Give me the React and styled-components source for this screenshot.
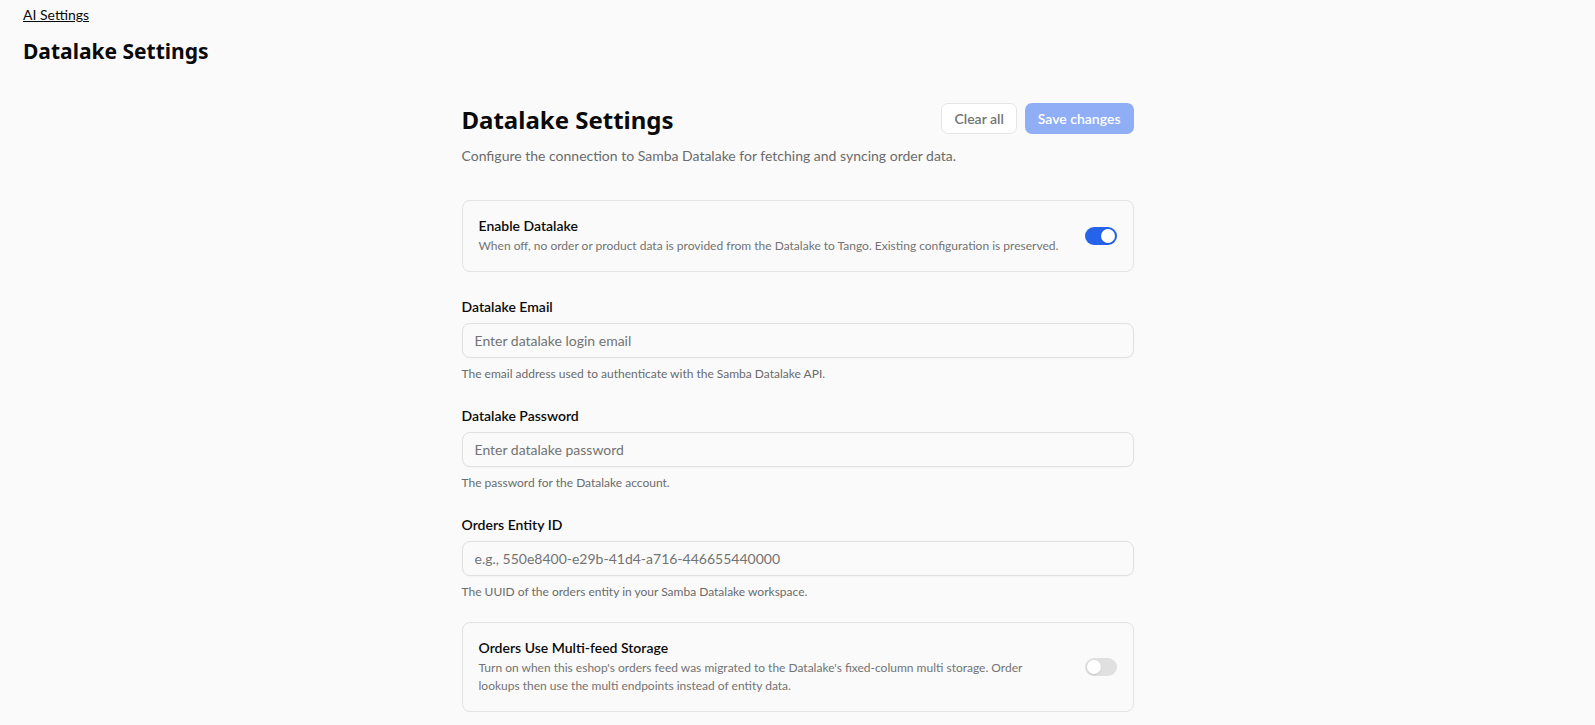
import React, { useState } from "react";
import styled, { createGlobalStyle } from "styled-components";

const GlobalStyle = createGlobalStyle`
  body {
    margin: 0;
    background: #fafafa;
    color: #0a0a0a;
    font-family: "Segoe UI", Lato, "Noto Sans", sans-serif;
  }
  * { box-sizing: border-box; }
`;

const headingFont = `"Segoe UI", "Noto Sans", Lato, sans-serif`;

const Page = styled.div`
  padding: 4px 23px 0;
`;

const Crumb = styled.a`
  display: inline-block;
  font-size: 14px;
  line-height: 20px;
  color: #0a0a0a;
  text-decoration: underline;
  cursor: pointer;
`;

const PageTitle = styled.h1`
  margin: 11px 0 0;
  font-family: ${headingFont};
  font-size: 21px;
  line-height: 30px;
  font-weight: 700;
`;

const Main = styled.main`
  width: 672px;
  margin: 37px auto 0;
`;

const HeaderRow = styled.div`
  display: flex;
  align-items: center;
  justify-content: space-between;
  height: 34px;
`;

const Title = styled.h2`
  margin: 0;
  font-family: ${headingFont};
  font-size: 24px;
  line-height: 34px;
  font-weight: 700;
`;

const Actions = styled.div`
  display: flex;
  gap: 8px;
  margin-top: -3px;
`;

const Button = styled.button`
  height: 31px;
  padding: 0 12px;
  border-radius: 7px;
  font-family: inherit;
  font-size: 14px;
  font-weight: 600;
  border: 1px solid ${(p) => (p.$primary ? "transparent" : "#e5e5e5")};
  background: ${(p) => (p.$primary ? "#8faef5" : "#ffffff")};
  color: ${(p) => (p.$primary ? "#ffffff" : "#737373")};
  cursor: pointer;
`;

const Subtitle = styled.p`
  margin: 9px 0 0;
  font-size: 14px;
  line-height: 20px;
  color: #6b6b6b;
`;

const Card = styled.div`
  display: flex;
  align-items: center;
  gap: 24px;
  margin-top: ${(p) => p.$top}px;
  padding: 15px 16px;
  border: 1px solid #e3e3e3;
  border-radius: 8px;
  background: #fafafa;
`;

const CardText = styled.div`
  flex: 1;
`;

const CardTitle = styled.div`
  font-size: 14px;
  line-height: 20px;
  font-weight: 600;
`;

const CardDesc = styled.div`
  margin-top: 1px;
  font-size: 12px;
  line-height: 18.5px;
  color: #737373;
`;

const Track = styled.button`
  position: relative;
  flex: none;
  width: 32px;
  height: 18px;
  padding: 0;
  border: none;
  border-radius: 9px;
  background: ${(p) => (p.$on ? "#2563eb" : "#e0e0e0")};
  cursor: pointer;
`;

const Knob = styled.span`
  position: absolute;
  top: 2px;
  left: ${(p) => (p.$on ? "16px" : "2px")};
  width: 14px;
  height: 14px;
  border-radius: 50%;
  background: #ffffff;
  box-shadow: 0 1px 2px rgba(0, 0, 0, 0.12);
`;

const Field = styled.div`
  margin-top: ${(p) => p.$top}px;
`;

const Label = styled.label`
  display: block;
  font-size: 14px;
  line-height: 20px;
  font-weight: 600;
`;

const Input = styled.input`
  display: block;
  width: 100%;
  height: 35px;
  margin-top: 6px;
  padding: 0 12px;
  border: 1px solid #e0e0e0;
  border-radius: 8px;
  background: #fafafa;
  font-family: inherit;
  font-size: 14px;
  color: #0a0a0a;
  box-shadow: 0 1px 2px rgba(0, 0, 0, 0.03);
  &::placeholder { color: #737373; }
  &:focus { outline: none; border-color: #a3a3a3; }
`;

const Help = styled.div`
  margin-top: 8px;
  font-size: 12px;
  line-height: 16px;
  color: #6b6b6b;
`;

const Switch = ({ on, onToggle }) => (
  <Track $on={on} onClick={onToggle} role="switch" aria-checked={on}>
    <Knob $on={on} />
  </Track>
);

const fields = [
  {
    label: "Datalake Email",
    placeholder: "Enter datalake login email",
    help: "The email address used to authenticate with the Samba Datalake API.",
  },
  {
    label: "Datalake Password",
    placeholder: "Enter datalake password",
    help: "The password for the Datalake account.",
    type: "password",
  },
  {
    label: "Orders Entity ID",
    placeholder: "e.g., 550e8400-e29b-41d4-a716-446655440000",
    help: "The UUID of the orders entity in your Samba Datalake workspace.",
  },
];

export default function App() {
  const [enabled, setEnabled] = useState(true);
  const [multi, setMulti] = useState(false);

  return (
    <>
      <GlobalStyle />
      <Page>
        <Crumb>AI Settings</Crumb>
        <PageTitle>Datalake Settings</PageTitle>
        <Main>
          <HeaderRow>
            <Title>Datalake Settings</Title>
            <Actions>
              <Button>Clear all</Button>
              <Button $primary>Save changes</Button>
            </Actions>
          </HeaderRow>
          <Subtitle>
            Configure the connection to Samba Datalake for fetching and syncing order data.
          </Subtitle>

          <Card $top={34}>
            <CardText>
              <CardTitle>Enable Datalake</CardTitle>
              <CardDesc>
                When off, no order or product data is provided from the Datalake to Tango. Existing
                configuration is preserved.
              </CardDesc>
            </CardText>
            <Switch on={enabled} onToggle={() => setEnabled(!enabled)} />
          </Card>

          {fields.map((f, i) => (
            <Field key={f.label} $top={i === 0 ? 25 : 24}>
              <Label>{f.label}</Label>
              <Input type={f.type || "text"} placeholder={f.placeholder} />
              <Help>{f.help}</Help>
            </Field>
          ))}

          <Card $top={22}>
            <CardText>
              <CardTitle>Orders Use Multi-feed Storage</CardTitle>
              <CardDesc>
                Turn on when this eshop's orders feed was migrated to the Datalake's fixed-column
                multi storage. Order lookups then use the multi endpoints instead of entity data.
              </CardDesc>
            </CardText>
            <Switch on={multi} onToggle={() => setMulti(!multi)} />
          </Card>
        </Main>
      </Page>
    </>
  );
}
